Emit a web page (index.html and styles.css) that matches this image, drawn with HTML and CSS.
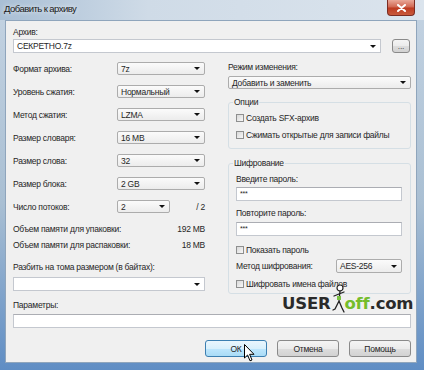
FILE: index.html
```html
<!DOCTYPE html>
<html lang="ru">
<head>
  <meta charset="UTF-8" />
  <title>Добавить к архиву</title>
  <link rel="stylesheet" href="styles.css">
</head>
<body>
  <div class="window">
    <div class="titlebar">
      <span class="title">Добавить к архиву</span>
      <span class="close">
        <svg width="9" height="8" viewBox="0 0 9 8"><path d="M1 1 L8 7 M8 1 L1 7" stroke="#fff" stroke-width="2" stroke-linecap="round"/></svg>
      </span>
    </div>

    <div class="client">
      <div class="label">Архив:</div>
      <div class="archive-row">
        <div class="combo edit grow"><span>СЕКРЕТНО.7z</span></div>
        <button class="btn browse">...</button>
      </div>

      <div class="columns">
        <div class="col-left">
          <div class="row"><span class="lbl">Формат архива:</span><div class="combo"><span>7z</span></div></div>
          <div class="row"><span class="lbl">Уровень сжатия:</span><div class="combo"><span>Нормальный</span></div></div>
          <div class="row"><span class="lbl">Метод сжатия:</span><div class="combo"><span>LZMA</span></div></div>
          <div class="row"><span class="lbl">Размер словаря:</span><div class="combo"><span>16 MB</span></div></div>
          <div class="row"><span class="lbl">Размер слова:</span><div class="combo"><span>32</span></div></div>
          <div class="row"><span class="lbl">Размер блока:</span><div class="combo"><span>2 GB</span></div></div>
          <div class="row"><span class="lbl">Число потоков:</span><div class="combo short"><span>2</span></div><span class="of">/ 2</span></div>

          <div class="mem first"><span>Объем памяти для упаковки:</span><span>192 MB</span></div>
          <div class="mem"><span>Объем памяти для распаковки:</span><span>18 MB</span></div>

          <div class="label split">Разбить на тома размером (в байтах):</div>
          <div class="combo edit split-box"><span></span></div>
        </div>

        <div class="col-right">
          <div class="label">Режим изменения:</div>
          <div class="combo mode"><span>Добавить и заменить</span></div>

          <div class="group options">
            <div class="group-title">Опции</div>
            <div class="check first"><span class="box"></span>Создать SFX-архив</div>
            <div class="check second"><span class="box"></span>Сжимать открытые для записи файлы</div>
          </div>

          <div class="group crypt">
            <div class="group-title">Шифрование</div>
            <div class="label pw1">Введите пароль:</div>
            <div class="edit pw">***</div>
            <div class="label pw2">Повторите пароль:</div>
            <div class="edit pw pw2-box">***</div>
            <div class="check show"><span class="box"></span>Показать пароль</div>
            <div class="enc-row">
              <span>Метод шифрования:</span>
              <div class="combo enc"><span>AES-256</span></div>
            </div>
            <div class="check names"><span class="box"></span>Шифровать имена файлов</div>
          </div>
        </div>
      </div>

      <div class="label params">Параметры:</div>
      <div class="edit params-box"></div>

      <div class="buttons">
        <button class="btn hover">ОК</button>
        <button class="btn">Отмена</button>
        <button class="btn">Помощь</button>
      </div>
    </div>

    <div class="logo">
      <span class="logo-dark">USER</span>
      <svg class="mascot" width="16" height="30" viewBox="0 0 16 30">
        <circle cx="9" cy="4" r="3" fill="#fff" stroke="#222" stroke-width="1.2"/>
        <path d="M9 7 L8 17 M8 10 L3 12 M8 10 L13 8 M8 17 L4 25 L2 26 M8 17 L11 24 L13 28" stroke="#222" stroke-width="1.3" fill="none" stroke-linecap="round"/>
        <path d="M6 12 L10 12 L10 16 L6 16 Z" fill="#7ac142"/>
      </svg>
      <span class="logo-green">off</span><span class="logo-dark">.com</span>
    </div>

    <svg class="cursor" width="12" height="18" viewBox="0 0 12 18">
      <path d="M0.5 0.5 L0.5 14 L3.6 11 L6 16.8 L8 16 L5.6 10.3 L10 10.3 Z" fill="#fff" stroke="#000" stroke-width="1" stroke-linejoin="round"/>
    </svg>
  </div>
</body>
</html>
```

FILE: styles.css
```css
* {
  box-sizing: border-box;
}
body {
  margin: 0;
  font-family: "Liberation Sans", Arial, sans-serif;
  font-size: 8.5px;
  letter-spacing: -0.25px;
  color: #262626;
}
.window {
  position: relative;
  width: 424px;
  height: 370px;
  display: flex;
  flex-direction: column;
  background: linear-gradient(to bottom, #c4d3e2 0%, #a9bfd3 55%, #5f8dc4 100%);
}
.titlebar {
  height: 20px;
  display: flex;
  align-items: flex-start;
  padding: 0 9px 0 4px;
  background: linear-gradient(to right, #a9bfd5, #cfdbe7 35%, #dbe4ed);
}
.title {
  line-height: 18px;
  font-size: 9.5px;
  letter-spacing: -0.55px;
  color: #1a1a1a;
  text-shadow: 0 0 5px rgba(255,255,255,0.9);
}
.close {
  margin-left: auto;
  width: 28px;
  height: 16px;
  display: flex;
  align-items: center;
  justify-content: center;
  border: 1px solid #7b2c22;
  border-top: none;
  border-radius: 0 0 4px 4px;
  background: linear-gradient(#e9a898, #d06650 48%, #bd3a20 52%, #c85a3c);
}
.client {
  flex: 1;
  margin: 0 7px 7px 5px;
  padding: 6px 5px 0 7px;
  background: #f0f0f0;
  border: 1px solid #8fa5bc;
}
.label {
  line-height: 11px;
  height: 11px;
  white-space: nowrap;
}

/* combo boxes */
.combo {
  height: 13px;
  display: flex;
  align-items: center;
  padding-left: 3px;
  border: 1px solid #acacac;
  border-radius: 2px;
  background: linear-gradient(#fbfbfb, #ececec);
  white-space: nowrap;
}
.combo span {
  flex: 1;
}
.combo::after {
  content: "";
  margin-right: 4px;
  border-left: 3px solid transparent;
  border-right: 3px solid transparent;
  border-top: 3px solid #111;
}
.combo.edit {
  background: #fff;
  border-color: #c4c8cf;
  border-radius: 0;
}
.grow {
  flex: 1;
}
.edit {
  height: 14px;
  background: #fff;
  border: 1px solid #c4c8cf;
  border-top-color: #abadb3;
  padding-left: 3px;
  line-height: 12px;
}

/* buttons */
.btn {
  height: 17px;
  width: 62px;
  padding: 0;
  font: inherit;
  letter-spacing: inherit;
  color: #262626;
  border: 1px solid #8a8a8a;
  border-radius: 3px;
  background: linear-gradient(#f4f4f4 0%, #ebebeb 50%, #dddddd 51%, #d2d2d2 100%);
}
.btn.hover {
  border-color: #3c7fb1;
  background: linear-gradient(#eaf6fd 0%, #d9f0fc 50%, #bee6fd 51%, #a9dbf6 100%);
}
.archive-row {
  display: flex;
  align-items: flex-start;
  margin-top: 1px;
}
.browse {
  width: 18px;
  height: 14px;
  margin: 0 1px 0 11px;
  line-height: 8px;
  color: #555;
}

/* two columns */
.columns {
  display: flex;
  gap: 23px;
  margin-top: 9px;
}
.col-left {
  width: 192px;
}
.col-right {
  flex: 1;
}
.row {
  display: flex;
  align-items: center;
  height: 13px;
}
.row + .row {
  margin-top: 10px;
}
.lbl {
  width: 104px;
}
.row .combo {
  width: 88px;
}
.row .combo.short {
  width: 53px;
}
.of {
  margin-left: auto;
}
.mem {
  display: flex;
  justify-content: space-between;
  line-height: 11px;
  margin-top: 5px;
}
.mem.first {
  margin-top: 11px;
}
.split {
  margin-top: 11px;
}
.split-box {
  margin-top: 4px;
}
.mode {
  margin-top: 3px;
}

/* group boxes */
.group {
  border: 1px solid #d5dfe5;
  border-radius: 3px;
  padding: 0 8px 0 7px;
}
.options {
  margin-top: 13px;
  padding-bottom: 8px;
}
.crypt {
  margin-top: 14px;
  padding-bottom: 4px;
}
.group-title {
  display: table;
  margin: -6px 0 0 -3px;
  padding: 0 1px;
  line-height: 11px;
  background: #f0f0f0;
}
.check {
  display: flex;
  align-items: center;
  gap: 2px;
  height: 11px;
  white-space: nowrap;
}
.box {
  width: 8px;
  height: 8px;
  border: 1px solid #8e8f8f;
  background: linear-gradient(135deg, #d8d8d8, #f8f8f8);
}
.options .first {
  margin-top: 4px;
}
.options .second {
  margin-top: 6px;
}
.pw1 {
  margin-top: 5px;
}
.pw {
  margin-top: 2px;
  font-size: 7px;
}
.pw2 {
  margin-top: 7px;
}
.pw2-box {
  margin-top: 3px;
}
.show {
  margin-top: 8px;
}
.enc-row {
  display: flex;
  align-items: center;
  justify-content: space-between;
  height: 14px;
  margin-top: 4px;
}
.combo.enc {
  width: 66px;
  height: 14px;
}
.names {
  margin-top: 5px;
}
.params {
  margin-top: 6px;
}
.params-box {
  margin-top: 3px;
}
.buttons {
  display: flex;
  justify-content: flex-end;
  gap: 10px;
  margin-top: 12px;
}

/* overlays */
.logo {
  position: absolute;
  left: 282px;
  top: 284px;
  display: flex;
  align-items: flex-end;
  height: 30px;
  font-family: "DejaVu Sans", sans-serif;
  font-weight: bold;
  font-size: 16.5px;
  letter-spacing: -0.2px;
  line-height: 16px;
  padding-bottom: 2px;
}
.logo-dark {
  color: #2a2a2a;
}
.logo-green {
  color: #74bd2c;
}
.mascot {
  margin: 0 -3px 0 1px;
  align-self: flex-start;
}
.cursor {
  position: absolute;
  left: 244px;
  top: 344px;
}
```
